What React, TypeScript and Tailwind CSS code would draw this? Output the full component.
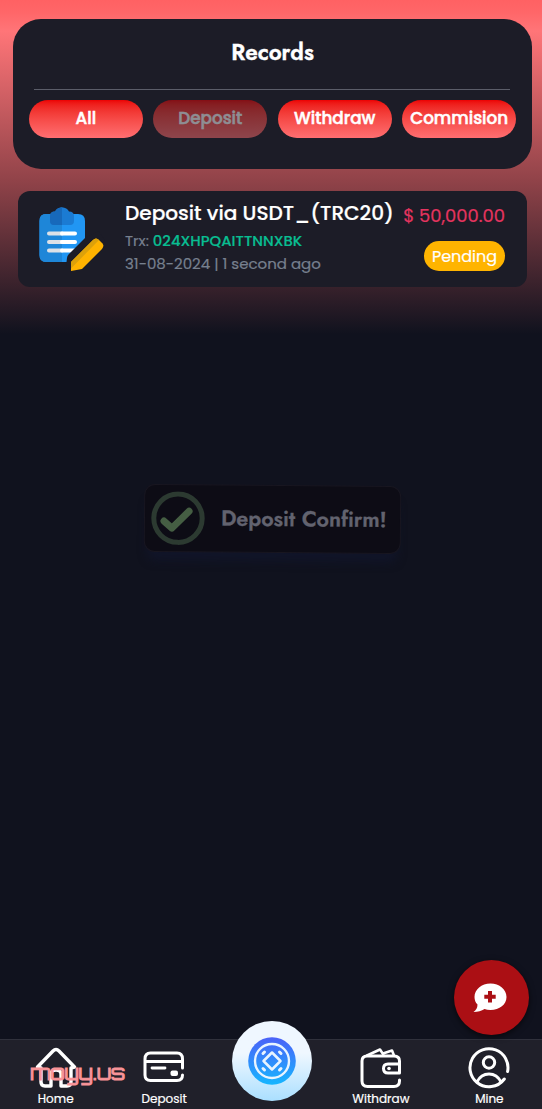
import React from "react";

const tabs = [
  { label: "All", faded: false },
  { label: "Deposit", faded: true },
  { label: "Withdraw", faded: false },
  { label: "Commision", faded: false },
];

function ClipboardIcon() {
  return (
    <svg className="h-16 w-[66px] shrink-0" viewBox="0 0 66 64">
      <path d="M7 7H39Q46 7 46 14V36L29 53V55H7Q.5 55 .5 48V14Q.5 7 7 7Z" fill="#2196f3" />
      <path d="M7 7H23V55H7Q.5 55 .5 48V14Q.5 7 7 7Z" fill="#1e86d8" />
      <path d="M16 4.5Q18 .5 23 .2Q28 .5 30 4.5Q35 4.5 35 9V14Q35 18 31 18H15Q11 18 11 14V9Q11 4.5 16 4.5Z" fill="#1b7bd3" />
      <path d="M16 4.5Q18 .5 23 .2V18H15Q11 18 11 14V9Q11 4.5 16 4.5Z" fill="#1769bb" />
      <path d="M10 26.5H23M10 35H23M10 43.5H23" stroke="#dce1e7" strokeWidth="4" strokeLinecap="round" />
      <path d="M23 26.5H36M23 35H36M23 43.5H36" stroke="#fff" strokeWidth="4" strokeLinecap="round" />
      <path d="M27 59L28 51Q28 49 30 47L46 31L60 24L68 37L43 63H29Z" fill="#1c1c27" />
      <path d="M32 55L54 33Q57 30 60 33L63.5 36.5Q65.5 39 63 42L43 62L32 64Z" fill="#ffb300" />
      <path d="M32 55L54 33Q57 30 60 33L32 61.5Z" fill="#dca10b" />
    </svg>
  );
}

function HomeIcon() {
  return (
    <svg className="h-[42px] w-[42px]" viewBox="0 0 42 42" fill="none" stroke="#fff" strokeWidth="3.4" strokeLinejoin="round" strokeLinecap="round">
      <path d="M2.5 20L18 4Q21 1 24 4L39.5 20L36 21V35Q36 39 32 39H26V27Q26 23 21 23Q16 23 16 27V39H10Q6 39 6 35V21Z" />
    </svg>
  );
}

function CardIcon() {
  return (
    <svg className="h-[42px] w-[42px]" viewBox="0 0 42 42" fill="none" stroke="#fff" strokeWidth="3" strokeLinecap="round">
      <path d="M39.5 21V12Q39.5 6 34 6H7.5Q2 6 2 12V28Q2 33.5 7.5 33.5H34Q39.5 33.5 39.5 28M2 14.5H39.5" />
      <path d="M9 21H22" strokeWidth="2.8" />
      <rect x="27.5" y="23.5" width="7.5" height="5.5" rx="2" fill="#fff" stroke="none" />
    </svg>
  );
}

function WalletIcon() {
  return (
    <svg className="h-[42px] w-[42px]" viewBox="0 0 42 42" fill="none" stroke="#fff" strokeWidth="3" strokeLinecap="round" strokeLinejoin="round">
      <path d="M39.5 33V34Q39.5 39.5 34 39.5H7.5Q2 39.5 2 34V14Q2 9 7 9H34Q39.5 9 39.5 14V26H28Q23.5 26 23.5 21.5Q23.5 17 28 17H39" />
      <path d="M7 8.5L20 2.5L24 8.5M23 6.5L32 3.5L34 8.5" strokeWidth="2.6" />
      <circle cx="29" cy="21.5" r="1.8" fill="#fff" stroke="none" />
    </svg>
  );
}

function MineIcon() {
  return (
    <svg className="h-[42px] w-[42px]" viewBox="0 0 42 42" fill="none" stroke="#fff" strokeWidth="3" strokeLinecap="round">
      <path d="M39.6 24.5A19 19 0 1 0 9 35.5A19 19 0 0 0 36.3 32" />
      <circle cx="21" cy="15.5" r="5.7" />
      <path d="M9 35Q13 27 21 27Q29 27 33 35" />
    </svg>
  );
}

const navItems = [
  { label: "Home", icon: <HomeIcon /> },
  { label: "Deposit", icon: <CardIcon /> },
  null,
  { label: "Withdraw", icon: <WalletIcon /> },
  { label: "Mine", icon: <MineIcon /> },
];

export default function App() {
  return (
    <div className="relative flex h-[1109px] w-[542px] flex-col overflow-hidden bg-[#10121e] bg-[linear-gradient(180deg,#ff6163_0px,#ff6668_12px,#ff7578_31px,#914349_180px,#10121e_334px)] font-['Poppins','Inter',sans-serif] text-white">
      <header className="ml-[13px] mt-[19px] h-[150px] w-[519px] shrink-0 rounded-[28px] bg-[#1c1c27] pt-4">
        <h1 className="h-[54px] text-center font-['Jost','Lato',sans-serif] text-[22.5px] font-semibold leading-[35px] [-webkit-text-stroke:0.4px_currentColor]">Records</h1>
        <div className="ml-[21px] w-[476px] border-t border-[#5b5d69]" />
        <div className="ml-4 mt-[10px] flex w-[487px] gap-[10.67px]">
          {tabs.map((t) => (
            <button
              key={t.label}
              className={`flex h-[38px] flex-1 basis-0 items-center justify-center whitespace-nowrap rounded-full bg-gradient-to-b from-[#ec0002] to-[#ff6e71] text-[16.8px] font-medium [-webkit-text-stroke:0.5px_currentColor] ${t.faded ? "opacity-50" : ""}`}
            >
              <span className="pb-px">{t.label}</span>
            </button>
          ))}
        </div>
      </header>

      <section className="ml-[18px] mt-[22px] flex h-24 w-[509px] shrink-0 rounded-xl bg-[#1c1c27]">
        <div className="ml-[21px] mt-4 w-[86px] shrink-0">
          <ClipboardIcon />
        </div>
        <div className="w-[278px] shrink-0 whitespace-nowrap pt-[7px]">
          <h2 className="text-[20.1px] font-medium leading-[30px] [-webkit-text-stroke:0.2px_currentColor]">Deposit via USDT_(TRC20)</h2>
          <p className="text-[14.85px] leading-[25px] text-[#77808f] [-webkit-text-stroke:0.2px_currentColor]">
            Trx: <span className="font-medium text-[#09bd91]">024XHPQAITTNNXBK</span>
          </p>
          <p className="text-[15px] leading-[22px] text-[#77808f] [-webkit-text-stroke:0.2px_currentColor]">31-08-2024 | 1 second ago</p>
        </div>
        <div className="flex w-[102px] shrink-0 flex-col items-end whitespace-nowrap pt-[11px]">
          <span className="text-[17.9px] leading-[27px] text-[#e5345f] [-webkit-text-stroke:0.2px_currentColor]">$ 50,000.00</span>
          <span className="mt-3 flex h-[30px] w-[81px] items-center justify-center rounded-full bg-[#ffb400] pt-px text-[16px] [-webkit-text-stroke:0.2px_currentColor]">Pending</span>
        </div>
      </section>

      <div className="absolute left-[144px] top-[485px] flex h-[68px] w-[257px] rotate-[0.5deg] items-center rounded-[11px] border border-[#181620] bg-[#0d0c15] shadow-[0_12px_10px_-4px_#111529]">
        <svg className="ml-[6px] h-[54px] w-[54px] shrink-0" viewBox="0 0 54 54" fill="none">
          <circle cx="27" cy="27" r="24.2" stroke="#2c3a31" strokeWidth="5" />
          <path d="M13 30L21 37L38 20" stroke="#455e43" strokeWidth="7" strokeLinecap="round" strokeLinejoin="round" />
        </svg>
        <span className="ml-4 whitespace-nowrap font-['Jost','Lato',sans-serif] text-[21.5px] font-semibold text-[#62636f] [-webkit-text-stroke:0.3px_currentColor]">Deposit Confirm!</span>
      </div>

      <nav className="relative mt-auto flex h-[70px] shrink-0 border-t border-[#30313c] bg-[#20202a]">
        {navItems.map((n, i) => (
          <div key={i} className="flex flex-1 basis-0 flex-col items-center pl-[3px] pt-[7px]">
            {n && (
              <>
                {n.icon}
                <span className="whitespace-nowrap text-[12px] leading-5 [-webkit-text-stroke:0.2px_currentColor]">{n.label}</span>
              </>
            )}
          </div>
        ))}
        <div className="absolute left-[232px] top-[-19px] flex h-20 w-20 items-center justify-center rounded-full bg-gradient-to-b from-[#eff7ff] from-40% to-[#aadfff]">
          <svg className="h-12 w-12" viewBox="0 0 48 48" fill="none">
            <defs>
              <linearGradient id="coin" x2="0" y2="1">
                <stop stopColor="#4b61f8" />
                <stop offset="1" stopColor="#16b6ff" />
              </linearGradient>
            </defs>
            <circle cx="24" cy="24" r="23.8" fill="url(#coin)" />
            <circle cx="24" cy="24" r="17" stroke="#e8f4ff" strokeWidth="2.4" />
            <path d="M24 15.5L32.5 24L24 32.5L15.5 24Z" stroke="#e8f4ff" strokeWidth="2.5" strokeLinejoin="round" />
            <path d="M15 16.5L16.5 15M31.5 15L33 16.5M15 31.5L16.5 33M31.5 33L33 31.5" stroke="#e8f4ff" strokeWidth="3" strokeLinecap="round" />
          </svg>
        </div>
        <span className="absolute left-[30px] top-[19px] whitespace-nowrap font-['Orbitron','DejaVu_Sans',sans-serif] text-[21px] leading-[26px] tracking-[-0.3px] text-[#f89498] [-webkit-text-stroke:1px_currentColor]">moyy.us</span>
      </nav>

      <button className="absolute left-[454px] top-[960px] flex h-[75px] w-[75px] items-center justify-center rounded-full bg-[#ab0f14] shadow-[0_2px_6px_#0009]">
        <svg className="mr-[3px] h-[30px] w-[34px]" viewBox="0 0 34 30">
          <path d="M17.5 .5C8.5 .5 1.5 6.5 1.5 14Q1.5 18.5 4.5 21.5Q4.5 26 .5 29Q7 29 11.5 26Q14 27 17.5 27C26.5 27 33.5 21.5 33.5 14S26.5 .5 17.5 .5Z" fill="#fff" />
          <path d="M17 8V19.5M11.3 13.7H22.7" stroke="#ab0f14" strokeWidth="4" />
        </svg>
      </button>
    </div>
  );
}
